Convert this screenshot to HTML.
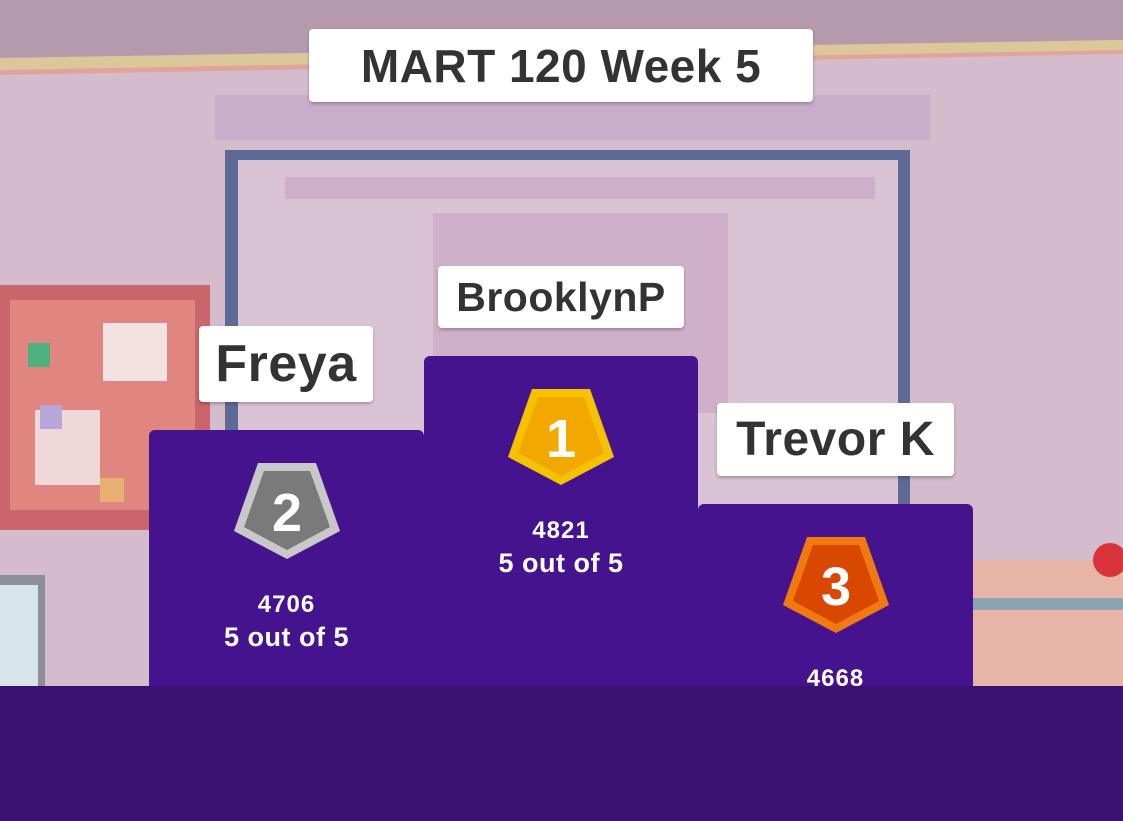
<!DOCTYPE html>
<html><head><style>
*{margin:0;padding:0;box-sizing:border-box}
body{width:1123px;height:821px;overflow:hidden;position:relative;background:#d4bccd;font-family:"Liberation Sans",sans-serif;font-weight:bold}
.a{position:absolute}
.box{position:absolute;background:#fff;border-radius:4px;box-shadow:0 2px 3px rgba(0,0,0,.25);color:#333;display:flex;align-items:center;justify-content:center;letter-spacing:0.5px}
.pod{position:absolute;background:#46138f;border-radius:6px 6px 0 0;color:#fff;text-align:center}
.sc{font-size:24px;line-height:33px;letter-spacing:1px}
.sc span{font-size:27px;letter-spacing:0.5px}
</style></head><body>
<svg class="a" style="left:0;top:0" width="1123" height="821">
<polygon points="0,0 1123,0 1123,40 0,58" fill="#b59aab"/>
<polygon points="0,58 1123,40 1123,50 0,70" fill="#ddc79a"/>
<polygon points="0,70 1123,50 1123,54 0,75" fill="#e0a49a"/>
<rect x="215" y="95" width="715" height="45" fill="#c9aecb"/>
<rect x="225" y="150" width="685" height="560" fill="#5d6a96"/>
<rect x="238" y="160" width="660" height="550" fill="#dbc3d6"/>
<rect x="285" y="177" width="590" height="22" fill="#cfaec8"/>
<rect x="433" y="213" width="295" height="200" fill="#d0b0c9"/>
<rect x="0" y="285" width="210" height="245" fill="#c9666c"/>
<rect x="10" y="300" width="185" height="210" fill="#e0857f"/>
<rect x="103" y="323" width="64" height="58" fill="#f4e2e2"/>
<rect x="35" y="410" width="65" height="75" fill="#f0d8d8"/>
<rect x="28" y="343" width="22" height="24" fill="#4fb080"/>
<rect x="40" y="405" width="22" height="24" fill="#b7a7d8"/>
<rect x="100" y="478" width="24" height="24" fill="#e8b070"/>
<rect x="0" y="575" width="45" height="111" fill="#8a8f9a"/>
<rect x="0" y="585" width="38" height="101" fill="#d8e4ec"/>
<rect x="973" y="560" width="150" height="126" fill="#e9b4a8"/>
<rect x="973" y="598" width="150" height="12" fill="#8da3b4"/>
<circle cx="1110" cy="560" r="17" fill="#d8333b"/>
</svg>
<div class="box" style="left:309px;top:29px;width:504px;height:73px;font-size:46px">MART 120 Week 5</div>
<div class="box" style="left:438px;top:266px;width:246px;height:62px;font-size:41px">BrooklynP</div>
<div class="box" style="left:199px;top:326px;width:174px;height:76px;font-size:52px">Freya</div>
<div class="box" style="left:717px;top:403px;width:237px;height:73px;font-size:48px">Trevor K</div>
<div class="pod" style="left:149px;top:430px;width:275px;height:256px">
<svg class="a" style="left:83px;top:31px" width="110" height="100"><polygon points="26,2 84,2 108,70 55,98 2,70" fill="#c8c8c8"/><polygon points="32,10 78,10 98,66 55,89 12,66" fill="#7a7a7a"/><text x="55" y="70" font-size="54" fill="#fff" text-anchor="middle" font-family="Liberation Sans" font-weight="bold">2</text></svg>
<div class="a sc" style="left:0;right:0;top:158px">4706<br><span>5 out of 5</span></div></div>
<div class="pod" style="left:424px;top:356px;width:274px;height:330px">
<svg class="a" style="left:82px;top:31px" width="110" height="100"><polygon points="26,2 84,2 108,70 55,98 2,70" fill="#f5c200"/><polygon points="32,10 78,10 98,66 55,89 12,66" fill="#f2a800"/><text x="55" y="70" font-size="54" fill="#fff" text-anchor="middle" font-family="Liberation Sans" font-weight="bold">1</text></svg>
<div class="a sc" style="left:0;right:0;top:158px">4821<br><span>5 out of 5</span></div></div>
<div class="pod" style="left:698px;top:504px;width:275px;height:182px">
<svg class="a" style="left:83px;top:31px" width="110" height="100"><polygon points="26,2 84,2 108,70 55,98 2,70" fill="#f07a10"/><polygon points="32,10 78,10 98,66 55,89 12,66" fill="#d94800"/><text x="55" y="70" font-size="54" fill="#fff" text-anchor="middle" font-family="Liberation Sans" font-weight="bold">3</text></svg>
<div class="a sc" style="left:0;right:0;top:158px">4668</div></div>
<div class="a" style="left:0;top:686px;width:1123px;height:135px;background:#3a1070"></div>
</body></html>
